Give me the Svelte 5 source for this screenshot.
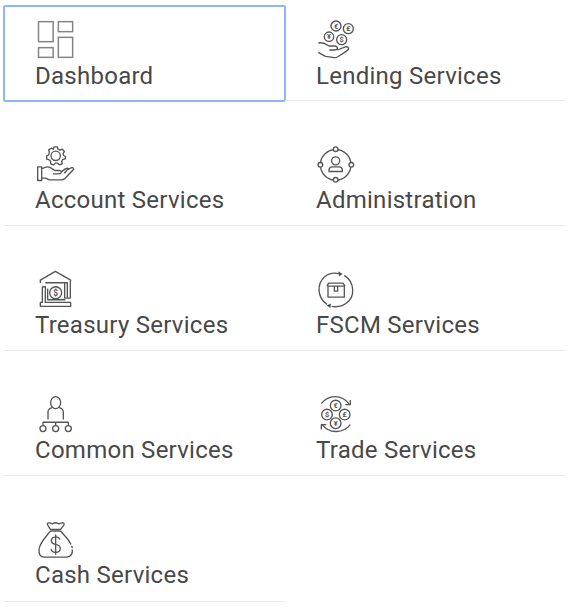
<script>
  const services = [
    { name: 'Dashboard', box: '105 51 120 120', active: true },
    { name: 'Lending Services', box: '18 21 120 120' },
    { name: 'Account Services', box: '15 5.4 120 120' },
    { name: 'Administration', box: '18 5.4 120 120' },
    { name: 'Treasury Services', box: '15 13.8 120 120' },
    { name: 'FSCM Services', box: '18 13.8 120 120' },
    { name: 'Common Services', box: '15 13.2 120 120' },
    { name: 'Trade Services', box: '18 13.2 120 120' },
    { name: 'Cash Services', box: '15 12.6 120 120' }
  ];
</script>

{#snippet coin(x, y, r, sign)}
  <circle cx={x} cy={y} {r} />
  <text {x} y={y + 8}>{sign}</text>
{/snippet}

<nav class="menu">
  {#each services as s}
    <div class="tile" class:active={s.active}>
      <svg class="icon" viewBox={s.box} aria-hidden="true">
        {#if s.name === 'Dashboard'}
          <g class="blocks">
            <rect x="115.5" y="65" width="44" height="60" />
            <rect x="175" y="65" width="43" height="30" />
            <rect x="115.5" y="143" width="44" height="29" />
            <rect x="175" y="112" width="43" height="60" />
          </g>
        {:else if s.name === 'Lending Services'}
          {@render coin(78, 48, 15, '€')}
          {@render coin(115, 56, 15, '£')}
          {@render coin(57, 80, 14, '¥')}
          {@render coin(95, 89, 15, '$')}
          <path d="M25 99C38 96 47 101 57 108H75Q84 110 82 116Q80 120 74 120H58M82 120L108 110Q116 110 116 117Q112 122 104 127L82 141Q76 144 68 142L47 139Q40 136 25 127" />
        {:else if s.name === 'Account Services'}
          <circle cx="77" cy="47" r="14" />
          <path d="M72 20H82L84 27L90 30L97 27L103 34L99 41L101 46L106 49V56L98 58L95 64L97 70L89 74L83 69H76L71 74L62 71V64L58 59L50 57V47L56 44L58 36L56 29L64 24L70 27Z" />
          <path d="M23 80H35V121H23ZM35 85L48 81Q57 78 67 86L75 91H89Q96 93 93 98Q91 101 85 101H69M94 95L106 86Q112 82 115 85L103 99M109 91L123 83Q131 81 131 87L105 115Q101 119 94 119H58L47 114H35" />
        {:else if s.name === 'Administration'}
          <circle cx="77" cy="74" r="46" />
          <g class="nodes">
            <circle cx="77" cy="27" r="7" />
            <circle cx="124" cy="74" r="7" />
            <circle cx="77" cy="119" r="7" />
            <circle cx="31" cy="74" r="7" />
          </g>
          <circle cx="77" cy="62" r="12" />
          <path d="M57 94V89Q58 80 67 80H87Q96 80 97 89V94Z" />
        {:else if s.name === 'Treasury Services'}
          <path d="M46 61H112V107H121V60L122 53L76 27L31 53V62M104 61V107H112M37 73V120H31V132H122V120H46V73H37M53 78V112H106" />
          <circle cx="77" cy="91" r="18" />
          <text x="77" y="100" class="big">$</text>
        {:else if s.name === 'FSCM Services'}
          <path d="M89 34C51 25 26 52 27 84Q29 111 51 126M65 132C98 138 130 116 128 82Q127 55 103 39" />
          <path class="solid" d="M86 28L97 35L88 41ZM61 136L51 129L62 124Z" />
          <path d="M54 71V104H103V71M54 71H103M51 71L56 62H99L105 71M73 71V86H83V71" />
        {:else if s.name === 'Common Services'}
          <ellipse cx="77" cy="45" rx="15" ry="18" />
          <path d="M68 59L58 64Q54 67 54 73V96M86 59L96 64Q100 67 100 73V96M39 114V104H115V114M77 104V114" />
          <circle cx="39" cy="123" r="9" />
          <circle cx="77" cy="123" r="9" />
          <circle cx="115" cy="123" r="9" />
        {:else if s.name === 'Trade Services'}
          {@render coin(77, 54, 16, '€')}
          {@render coin(51, 81, 16, '$')}
          {@render coin(104, 81, 16, '£')}
          {@render coin(77, 107, 16, '¥')}
          <path d="M34 48C56 20 96 20 117 49M121 37V51H106M121 111C101 137 58 140 37 112M34 126V111H49" />
        {:else}
          <path d="M61 50L52 35Q52 29 59 30L68 33Q77 27 86 33L96 30Q104 29 102 36L92 50ZM61 55H92M61 55C52 68 29 88 27 110Q25 132 43 133H110Q129 131 127 110M92 55C102 67 116 79 123 95M125 99L127 106" />
          <path d="M77 65V126M90 80Q87 72 77 72Q64 73 64 83Q64 92 77 95Q91 98 91 108Q90 119 77 119Q65 118 63 108" />
        {/if}
      </svg>
      <span class="label">{s.name}</span>
    </div>
  {/each}
</nav>

<style>
  :global(body) {
    background: #fff;
  }
  .menu {
    display: grid;
    grid-template-columns: repeat(2, 281px);
    grid-template-rows: repeat(4, 95px) 96px;
    row-gap: 30px;
    padding: 6px 4px 7px;
    font-family: Roboto, sans-serif;
  }
  .tile {
    box-sizing: border-box;
    display: flex;
    flex-direction: column;
    align-items: flex-start;
    padding: 11px 0 0 31px;
    border-bottom: 1px solid #ebebeb;
  }
  .active {
    border-bottom-color: transparent;
    outline: 2px solid #8db6f8;
    outline-offset: -1px;
    border-radius: 1px;
  }
  .icon {
    width: 40px;
    height: 40px;
    overflow: visible;
    fill: none;
    stroke: #555;
    stroke-width: 4;
    stroke-linejoin: round;
  }
  .blocks {
    stroke: #858585;
    stroke-width: 4.5;
    stroke-linejoin: miter;
  }
  .nodes {
    fill: #fff;
  }
  .solid {
    fill: #444;
    stroke-width: 1;
  }
  .icon text {
    fill: #555;
    stroke: none;
    font-size: 22px;
    font-weight: 700;
    text-anchor: middle;
  }
  .icon .big {
    font-size: 25px;
  }
  .label {
    margin-top: 4px;
    font-size: 24px;
    line-height: 28px;
    letter-spacing: 0.26px;
    color: #484848;
    white-space: nowrap;
  }
  .tile:nth-child(-n + 2) .label {
    margin-top: 5px;
  }
</style>
